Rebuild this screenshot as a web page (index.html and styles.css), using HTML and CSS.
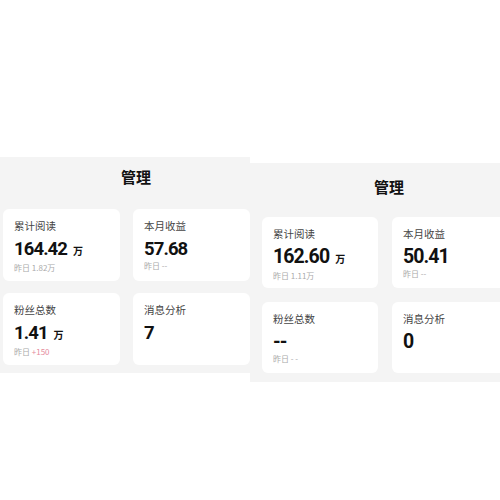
FILE: index.html
```html
<!DOCTYPE html>
<html lang="zh">
<head>
  <meta charset="UTF-8">
  <meta name="viewport" content="width=device-width, initial-scale=1.0">
  <title>管理</title>
  <link rel="stylesheet" href="styles.css">
</head>
<body>
  <div class="board">
    <div class="shot shot-left">
      <div class="panel">
        <div class="title">管理</div>
        <div class="grid">
          <div class="card">
            <div class="label">累计阅读</div>
            <div class="value">164.42<span class="unit">万</span></div>
            <div class="sub">昨日 1.82万</div>
          </div>
          <div class="card">
            <div class="label">本月收益</div>
            <div class="value">57.68</div>
            <div class="sub">昨日 --</div>
          </div>
          <div class="card">
            <div class="label">粉丝总数</div>
            <div class="value">1.41<span class="unit">万</span></div>
            <div class="sub">昨日 <span class="up">+150</span></div>
          </div>
          <div class="card">
            <div class="label">消息分析</div>
            <div class="value">7</div>
          </div>
        </div>
      </div>
    </div>

    <div class="shot shot-right">
      <div class="panel">
        <div class="title">管理</div>
        <div class="grid">
          <div class="card">
            <div class="label">累计阅读</div>
            <div class="value">162.60<span class="unit">万</span></div>
            <div class="sub">昨日 1.11万</div>
          </div>
          <div class="card">
            <div class="label">本月收益</div>
            <div class="value">50.41</div>
            <div class="sub">昨日 --</div>
          </div>
          <div class="card">
            <div class="label">粉丝总数</div>
            <div class="value">--</div>
            <div class="sub">昨日 - -</div>
          </div>
          <div class="card">
            <div class="label">消息分析</div>
            <div class="value">0</div>
          </div>
        </div>
      </div>
    </div>
  </div>
</body>
</html>
```

FILE: styles.css
```css
body {
  margin: 0;
  background: #fff;
  font-family: "Noto Sans CJK SC", "Noto Sans", sans-serif;
  color: #222;
}
.board {
  display: flex;
  align-items: flex-start;
  width: 500px;
}
.shot {
  width: 250px;
  overflow: hidden;
  flex-shrink: 0;
}
.shot-left {
  margin-top: 157px;
}
.shot-right {
  margin-top: 163px;
}
.panel {
  background: #f4f4f4;
  width: 272px;
}
.title {
  font-size: 15px;
  font-weight: bold;
  color: #111;
  line-height: 20px;
  padding-top: 10px;
  height: 52px;
  box-sizing: border-box;
  text-align: center;
}
.grid {
  display: grid;
  grid-template-columns: 117px 117px;
  column-gap: 13px;
  row-gap: 12px;
  padding: 0 0 8px 3px;
}
.card {
  background: #fff;
  border-radius: 6px;
  height: 72px;
  padding: 10px 0 0 11px;
  box-sizing: border-box;
}
.label {
  font-size: 10.5px;
  line-height: 14px;
  color: #444;
}
.value {
  font-family: "Roboto", "Liberation Sans", sans-serif;
  font-size: 18.5px;
  font-weight: bold;
  line-height: 22px;
  margin-top: 5px;
  color: #111;
  letter-spacing: -0.9px;
}
.unit {
  font-family: "Noto Sans CJK SC", sans-serif;
  font-size: 10px;
  font-weight: bold;
  letter-spacing: 0;
  margin-left: 6px;
}
.sub {
  font-size: 8px;
  line-height: 12px;
  color: #aaa;
  margin-top: 0;
}
.up {
  color: #e58a9b;
}

.shot-right .panel {
  width: 278px;
}
.shot-right .title {
  padding-top: 14px;
  height: 54px;
}
.shot-right .grid {
  grid-template-columns: 116px 116px;
  column-gap: 14px;
  row-gap: 14px;
  padding: 0 0 9px 12px;
}
.shot-right .card {
  height: 71px;
}
.shot-right .value {
  font-size: 19.5px;
  margin-top: 5px;
}
```
